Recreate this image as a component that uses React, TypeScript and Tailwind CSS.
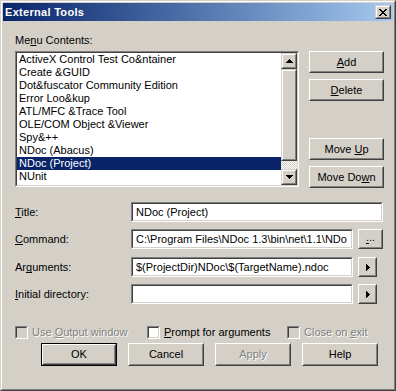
import type { ReactNode } from "react";

const listItems = [
  "ActiveX Control Test Co&ntainer",
  "Create &GUID",
  "Dot&fuscator Community Edition",
  "Error Loo&kup",
  "ATL/MFC &Trace Tool",
  "OLE/COM Object &Viewer",
  "Spy&++",
  "NDoc (Abacus)",
  "NDoc (Project)",
  "NUnit",
];

const selectedIndex = 8;

// "&x" marks the mnemonic letter, drawn underlined
function Mnemonic({ text }: { text: string }) {
  const i = text.indexOf("&");
  if (i < 0) return <>{text}</>;
  return (
    <>
      {text.slice(0, i)}
      <span className="underline underline-offset-[1px] [text-decoration-skip-ink:none]">{text[i + 1]}</span>
      {text.slice(i + 2)}
    </>
  );
}

function Raised({ className = "", children }: { className?: string; children?: ReactNode }) {
  return (
    <div className={`border border-t-white border-l-white border-b-[#404040] border-r-[#404040] ${className}`}>
      <div className="flex h-full w-full items-center justify-center border border-t-[#d4d0c8] border-l-[#d4d0c8] border-b-[#808080] border-r-[#808080]">
        {children}
      </div>
    </div>
  );
}

function ScrollPart({ className = "", children }: { className?: string; children?: ReactNode }) {
  return (
    <div className={`border border-t-[#d4d0c8] border-l-[#d4d0c8] border-b-[#404040] border-r-[#404040] ${className}`}>
      <div className="flex h-full w-full items-center justify-center border border-t-white border-l-white border-b-[#808080] border-r-[#808080] bg-[#d4d0c8]">
        {children}
      </div>
    </div>
  );
}

function Sunken({ className = "", inner = "bg-white", children }: { className?: string; inner?: string; children?: ReactNode }) {
  return (
    <div className={`border border-t-[#808080] border-l-[#808080] border-b-white border-r-white ${className}`}>
      <div className={`h-full w-full overflow-hidden border border-t-[#404040] border-l-[#404040] border-b-[#d4d0c8] border-r-[#d4d0c8] ${inner}`}>
        {children}
      </div>
    </div>
  );
}

function PushButton({ label, disabled = false }: { label: string; disabled?: boolean }) {
  return (
    <Raised className="h-[22px] w-[75px]">
      <span className={disabled ? "text-[#808080] [text-shadow:1px_1px_0_#fff]" : ""}>
        <Mnemonic text={label} />
      </span>
    </Raised>
  );
}

function ArrowUp() {
  return (
    <svg width="7" height="4" viewBox="0 0 7 4" shapeRendering="crispEdges">
      <path d="M3 0h1v1h1v1h1v1h1v1H0V3h1V2h1V1h1z" fill="#000" />
    </svg>
  );
}

function ArrowDown() {
  return (
    <svg width="7" height="4" viewBox="0 0 7 4" shapeRendering="crispEdges">
      <path d="M0 0h7v1H6v1H5v1H4v1H3V3H2V2H1V1H0z" fill="#000" />
    </svg>
  );
}

function ArrowRight() {
  return (
    <svg width="4" height="7" viewBox="0 0 4 7" shapeRendering="crispEdges">
      <path d="M0 0h1v1h1v1h1v1h1v1H3v1H2v1H1v1H0z" fill="#000" />
    </svg>
  );
}

function CloseGlyph() {
  return (
    <svg width="8" height="7" viewBox="0 0 8 7" shapeRendering="crispEdges">
      <path
        d="M0 0h2v1h1v1h2V1h1V0h2v1H7v1H6v1H5v1h1v1h1v1h1v1H6V6H5V5H3v1H2v1H0V6h1V5h1V4h1V3H2V2H1V1H0z"
        fill="#000"
      />
    </svg>
  );
}

function Checkbox({ label, disabled = false, width }: { label: string; disabled?: boolean; width: string }) {
  return (
    <div className={`flex items-center ${width}`}>
      <Sunken className="h-[13px] w-[13px] shrink-0" inner={disabled ? "bg-[#d4d0c8]" : "bg-white"} />
      <span className={`ml-[4px] whitespace-nowrap ${disabled ? "text-[#808080] [text-shadow:1px_1px_0_#fff]" : ""}`}>
        <Mnemonic text={label} />
      </span>
    </div>
  );
}

function FieldRow({ label, className = "", children }: { label: string; className?: string; children: ReactNode }) {
  return (
    <div className={`flex h-[20px] items-center ${className}`}>
      <span className="w-[116px] shrink-0">
        <Mnemonic text={label} />
      </span>
      {children}
    </div>
  );
}

export default function App() {
  return (
    <div className="h-[391px] w-[396px] border border-t-[#d4d0c8] border-l-[#d4d0c8] border-b-[#404040] border-r-[#404040] bg-[#d4d0c8] font-['Liberation_Sans',Arial,sans-serif] text-[11px] leading-[13px] text-black">
      <div className="flex h-full flex-col border border-t-white border-l-white border-b-[#808080] border-r-[#808080] p-px">
        {/* Title bar */}
        <div className="flex h-[18px] shrink-0 items-center justify-between bg-linear-to-r from-[#0a246a] to-[#a6caf0] pl-[2px] pr-[2px]">
          <span className="text-[11px] font-bold tracking-[0.3px] text-white">External Tools</span>
          <ScrollPart className="h-[14px] w-[16px]">
            <span className="-ml-px flex">
              <CloseGlyph />
            </span>
          </ScrollPart>
        </div>

        {/* Body */}
        <div className="flex flex-col pl-[12px] pt-[13px]">
          <span>
            <Mnemonic text="Me&nu Contents:" />
          </span>

          <div className="mt-[4px] flex">
            <Sunken className="h-[136px] w-[284px]">
              <div className="flex h-full">
                <div className="flex-1">
                  {listItems.map((item, i) => (
                    <div
                      key={item}
                      className={`h-[13px] whitespace-nowrap pl-[2px] leading-[13px] ${
                        i === selectedIndex ? "bg-[#0a246a] text-white" : ""
                      }`}
                    >
                      {item}
                    </div>
                  ))}
                </div>
                <div className="flex w-[16px] flex-col">
                  <ScrollPart className="h-[16px] w-[16px]">
                    <ArrowUp />
                  </ScrollPart>
                  <ScrollPart className="h-[92px] w-[16px]" />
                  <div className="flex-1 bg-[image:repeating-conic-gradient(#ffffff_0%_25%,#d4d0c8_0%_50%)] bg-[length:2px_2px]" />
                  <ScrollPart className="h-[16px] w-[16px]">
                    <ArrowDown />
                  </ScrollPart>
                </div>
              </div>
            </Sunken>

            <div className="ml-[10px] flex h-[137px] flex-col justify-between">
              <div className="flex flex-col gap-[6px]">
                <PushButton label="&Add" />
                <PushButton label="&Delete" />
              </div>
              <div className="flex flex-col gap-[6px]">
                <PushButton label="Move &Up" />
                <PushButton label="Move Do&wn" />
              </div>
            </div>
          </div>

          {/* Fields */}
          <div className="mt-[14px] flex flex-col">
            <FieldRow label="&Title:">
              <Sunken className="h-[20px] w-[252px]">
                <div className="whitespace-nowrap pl-[3px] leading-[16px]">NDoc (Project)</div>
              </Sunken>
            </FieldRow>
            <FieldRow label="&Command:" className="mt-[7px]">
              <Sunken className="h-[20px] w-[222px]">
                <div className="whitespace-nowrap pl-[3px] leading-[16px]">C:\Program Files\NDoc 1.3\bin\net\1.1\NDo</div>
              </Sunken>
              <Raised className="ml-[5px] h-[20px] w-[25px]">
                <span className="-mt-[3px]">
                  <span className="underline underline-offset-[2px]">.</span>..
                </span>
              </Raised>
            </FieldRow>
            <FieldRow label="Ar&guments:" className="mt-[8px]">
              <Sunken className="h-[20px] w-[222px]">
                <div className="whitespace-nowrap pl-[3px] leading-[16px]">$(ProjectDir)NDoc\$(TargetName).ndoc</div>
              </Sunken>
              <Raised className="ml-[5px] h-[20px] w-[19px]">
                <ArrowRight />
              </Raised>
            </FieldRow>
            <FieldRow label="&Initial directory:" className="mt-[7px]">
              <Sunken className="h-[20px] w-[222px]" />
              <Raised className="ml-[5px] h-[20px] w-[19px]">
                <ArrowRight />
              </Raised>
            </FieldRow>
          </div>

          {/* Options */}
          <div className="mt-[22px] flex h-[13px] items-center">
            <Checkbox label="Use &Output window" disabled width="w-[132px]" />
            <Checkbox label="&Prompt for arguments" width="w-[140px]" />
            <Checkbox label="Close on &exit" disabled width="w-[100px]" />
          </div>

          {/* Dialog buttons */}
          <div className="ml-[26px] mt-[4px] flex gap-[11px]">
            <div className="h-[23px] w-[76px] border border-black">
              <div className="flex h-full w-full items-center justify-center border border-t-white border-l-white border-b-[#404040] border-r-[#404040]">
                <div className="flex h-full w-full items-center justify-center border border-t-[#d4d0c8] border-l-[#d4d0c8] border-b-[#808080] border-r-[#808080]">
                  OK
                </div>
              </div>
            </div>
            <Raised className="h-[23px] w-[76px]">Cancel</Raised>
            <Raised className="h-[23px] w-[76px]">
              <span className="text-[#808080] [text-shadow:1px_1px_0_#fff]">Apply</span>
            </Raised>
            <Raised className="h-[23px] w-[76px]">Help</Raised>
          </div>
        </div>
      </div>
    </div>
  );
}
